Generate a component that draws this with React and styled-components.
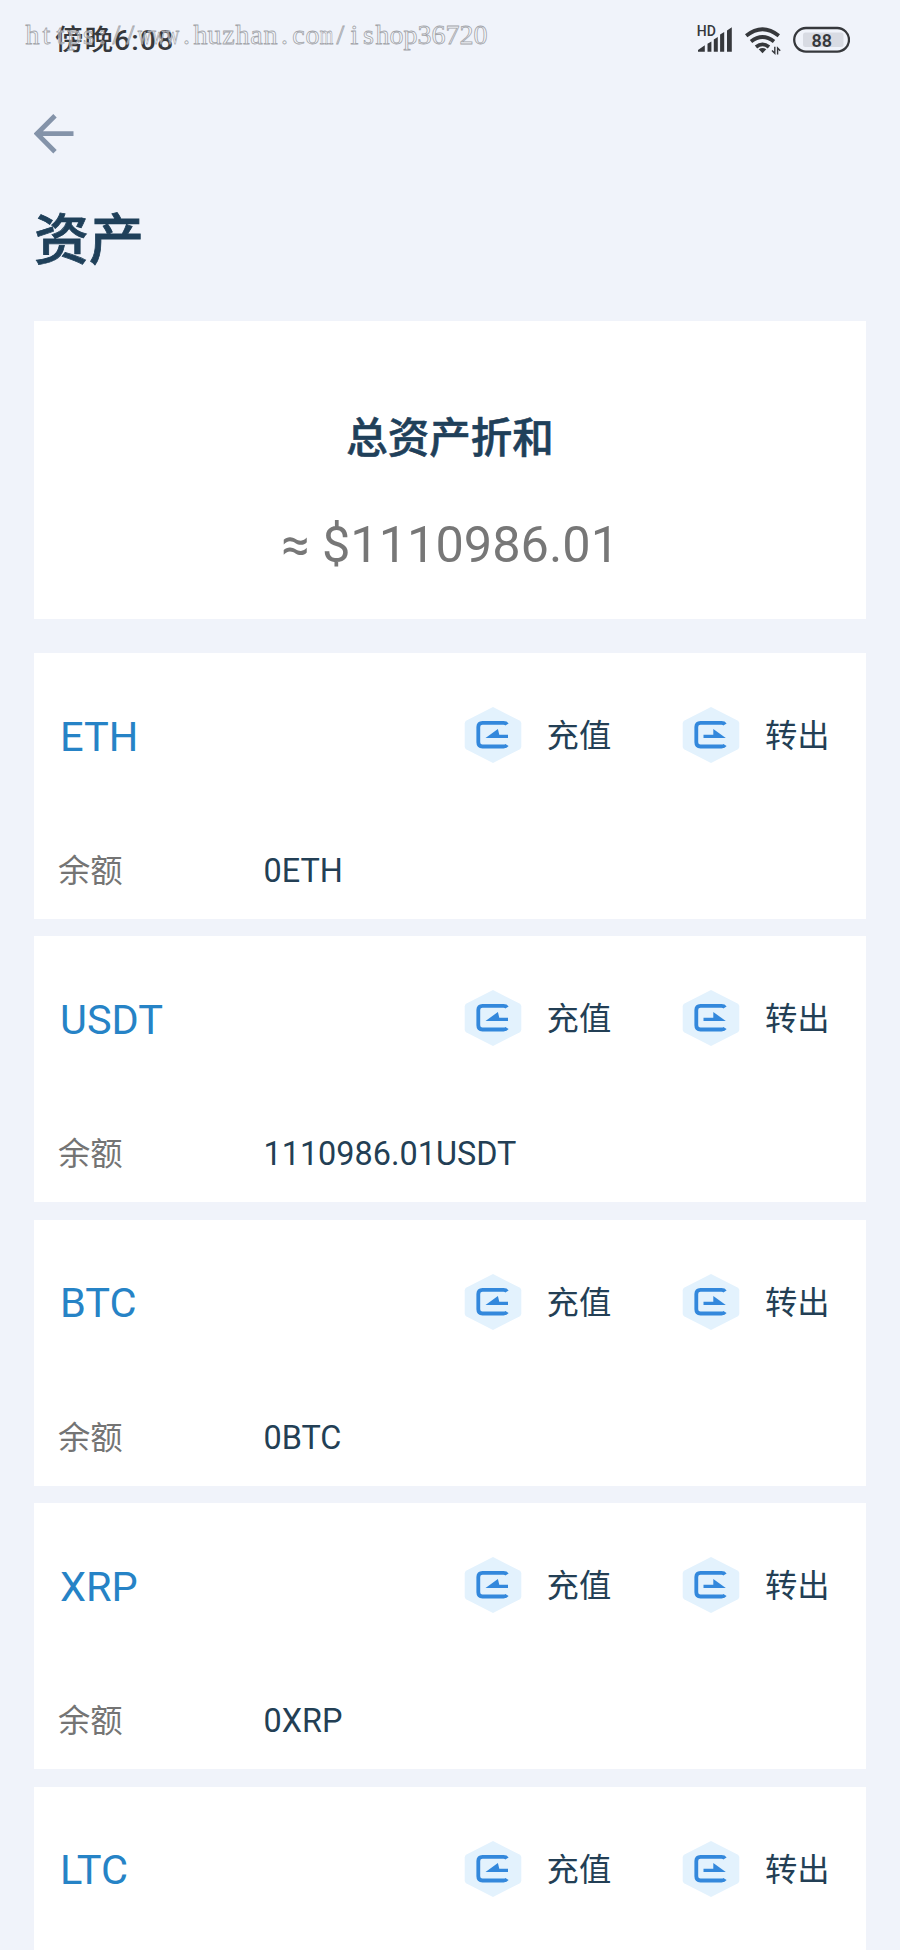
import styled, { createGlobalStyle } from 'styled-components'

const GlobalStyle = createGlobalStyle`
  * {
    box-sizing: border-box;
  }
  body {
    margin: 0;
    background: #f0f3fa;
    font-family: Roboto, 'Noto Sans CJK SC', sans-serif;
    color: #233f55;
  }
`

const Screen = styled.div`
  position: relative;
  width: 900px;
  height: 1950px;
  overflow: hidden;
`

const StatusBar = styled.header`
  height: 80px;
  padding: 0 50px 0 55px;
  display: flex;
  align-items: center;
  justify-content: space-between;
`

const Clock = styled.span`
  padding-top: 2px;
  font-size: 28.5px;
  font-weight: 500;
  line-height: 40px;
  letter-spacing: 1px;
  color: #36383c;
`

const StatusIcons = styled.svg`
  display: block;
`

const Watermark = styled.svg`
  position: absolute;
  top: 10px;
  left: 20px;
  & text {
    font-family: 'Liberation Serif', serif;
    font-size: 28px;
    text-anchor: middle;
    fill: rgba(255, 255, 255, 0.45);
    stroke: #a3a5aa;
    stroke-width: 0.8px;
  }
`

const BackButton = styled.button`
  display: block;
  height: 108px;
  padding: 0 0 0 34px;
  border: 0;
  background: none;
  & svg {
    display: block;
  }
`

const Title = styled.h1`
  height: 133px;
  margin: 0;
  padding: 12px 0 0 34px;
  font-size: 55px;
  font-weight: 500;
  line-height: 80px;
  color: #1f405a;
  -webkit-text-stroke: 0.8px #1f405a;
`

const Main = styled.main`
  padding: 0 34px;
`

const TotalCard = styled.section`
  height: 298px;
  margin-bottom: 34px;
  padding-top: 88px;
  background: #fff;
  text-align: center;
`

const TotalLabel = styled.h2`
  margin: 0;
  font-size: 41.5px;
  font-weight: 500;
  line-height: 60px;
  color: #1f405a;
  -webkit-text-stroke: 0.6px #1f405a;
`

const TotalValue = styled.p`
  margin: 43px 0 0;
  font-size: 50.5px;
  line-height: 66px;
  color: #777;
`

const List = styled.div`
  display: flex;
  flex-direction: column;
  gap: 17.4px;
`

const Card = styled.article`
  height: 266px;
  padding-top: 43px;
  background: #fff;
`

const CardHead = styled.div`
  display: flex;
  align-items: center;
  height: 78px;
`

const Coin = styled.h3`
  flex: 1;
  margin: 0;
  padding: 3px 0 0 26px;
  font-size: 41.5px;
  font-weight: 400;
  line-height: 50px;
  color: #2683c6;
`

const Action = styled.button`
  display: flex;
  align-items: center;
  gap: 25px;
  width: 218.4px;
  padding: 0;
  border: 0;
  background: none;
  color: inherit;
  font-family: inherit;
  font-size: 32.3px;
  line-height: 46px;
  & span {
    padding-top: 2px;
  }
  &:last-child {
    width: 184px;
  }
`

const Balance = styled.div`
  display: flex;
  align-items: center;
  height: 46px;
  margin-top: 74px;
  padding-left: 24px;
  font-size: 32.4px;
  line-height: 46px;
`

const BalanceLabel = styled.span`
  width: 205.5px;
  font-size: 32.3px;
  color: #747474;
`

const HexIcon = ({ out }) => (
  <svg width="58" height="58" viewBox="0 0 58 58">
    <path d="M29 1 L55.5 14.5 Q57.3 15.5 57.3 17.5 V40.5 Q57.3 42.5 55.5 43.5 L29 57 L2.5 43.5 Q.7 42.5 .7 40.5 V17.5 Q.7 15.5 2.5 14.5 Z" fill="#e3f2fd" />
    <path d="M43 18.5 Q42 16.9 39.5 16.9 H18.5 Q14.3 16.9 14.3 21.1 V36.3 Q14.3 40.5 18.5 40.5 H39.5 Q42 40.5 43 38.9" fill="none" stroke="#3388dc" strokeWidth="3.8" />
    {out
      ? <path d="M21.5 28.8 H31.3 V23 L43.8 32 H21.5 Z" fill="#3388dc" />
      : <path d="M44 28.8 H35.3 L33.9 23 L21.5 32 H44 Z" fill="#3388dc" />
    }
  </svg>
)

const Arrow = () => (
  <svg width="42" height="108" viewBox="0 0 42 108">
    <path d="M39.5 53.7 H4 M21 35.7 L3 53.7 L21 71.7" fill="none" stroke="#8493a9" strokeWidth="4.8" />
  </svg>
)

const Status = () => (
  <StatusIcons width="155" height="40" viewBox="695 20 155 40">
    <text x="696.8" y="36" fontSize="14" fontWeight="500" fill="#36383c" textLength="19">HD</text>
    <path d="M698 51.8 V50 L704.8 45.3 V51.8 Z M707.5 51.8 V43.8 L711.4 41.4 V51.8 Z M713.8 51.8 V39.5 L717.8 37 V51.8 Z M720.1 51.8 V34.5 L724.2 32 V51.8 Z M727 51.8 V30.5 L731.8 27.3 V51.8 Z" fill="#36383c" />
    <g fill="none" stroke="#36383c" strokeWidth="3.8">
      <path d="M746.2 35.8 Q762.5 22.8 778.8 35.8" />
      <path d="M751 41.6 Q762.5 32.4 774 41.6" />
      <path d="M756 47 Q762.5 41.8 769 47" />
    </g>
    <path d="M758.7 49.3 Q762.5 46.6 766.3 49.3 L762.5 53.2 Z" fill="#36383c" />
    <path d="M774.8 46.8 V53.3 L772 50.5 M777.6 54.5 V48 L780.2 50.8" fill="none" stroke="#36383c" strokeWidth="1.4" />
    <rect x="794.2" y="28" width="54.8" height="23.6" rx="11.8" fill="none" stroke="#36383c" strokeWidth="2.3" />
    <rect x="803" y="32.5" width="40.5" height="14.6" rx="2.5" fill="#d8dbe3" />
    <text x="821.8" y="46.7" fontSize="19" fontWeight="600" fill="#36383c" textAnchor="middle" textLength="20.5" lengthAdjust="spacingAndGlyphs">88</text>
  </StatusIcons>
)

const url = 'https://www.huzhan.com/ishop36720'

// every character sits in a 14px cell, the wide ones are squeezed to fit it
const WatermarkText = () => (
  <text y="34">
    {url.split('').map((char, i) => (
      <tspan
        key={i}
        x={12.5 + i * 14}
        textLength={/[mw]/.test(char) ? 13.5 : undefined}
        lengthAdjust="spacingAndGlyphs"
      >
        {char}
      </tspan>
    ))}
  </text>
)

const coins = [
  { name: 'ETH', balance: '0' },
  { name: 'USDT', balance: '1110986.01' },
  { name: 'BTC', balance: '0' },
  { name: 'XRP', balance: '0' },
  { name: 'LTC', balance: '0' },
]

export default function App () {
  return (
    <Screen>
      <GlobalStyle />
      <StatusBar>
        <Clock>傍晚6:08</Clock>
        <Status />
      </StatusBar>
      <BackButton><Arrow /></BackButton>
      <Title>资产</Title>
      <Main>
        <TotalCard>
          <TotalLabel>总资产折和</TotalLabel>
          <TotalValue>≈ $1110986.01</TotalValue>
        </TotalCard>
        <List>
          {coins.map(({ name, balance }) => (
            <Card key={name}>
              <CardHead>
                <Coin>{name}</Coin>
                <Action><HexIcon /><span>充值</span></Action>
                <Action><HexIcon out /><span>转出</span></Action>
              </CardHead>
              {name !== 'LTC' &&
                <Balance>
                  <BalanceLabel>余额</BalanceLabel>
                  <span>{balance}{name}</span>
                </Balance>
              }
            </Card>
          ))}
        </List>
      </Main>
      <Watermark width="480" height="44">
        <WatermarkText />
      </Watermark>
    </Screen>
  )
}
